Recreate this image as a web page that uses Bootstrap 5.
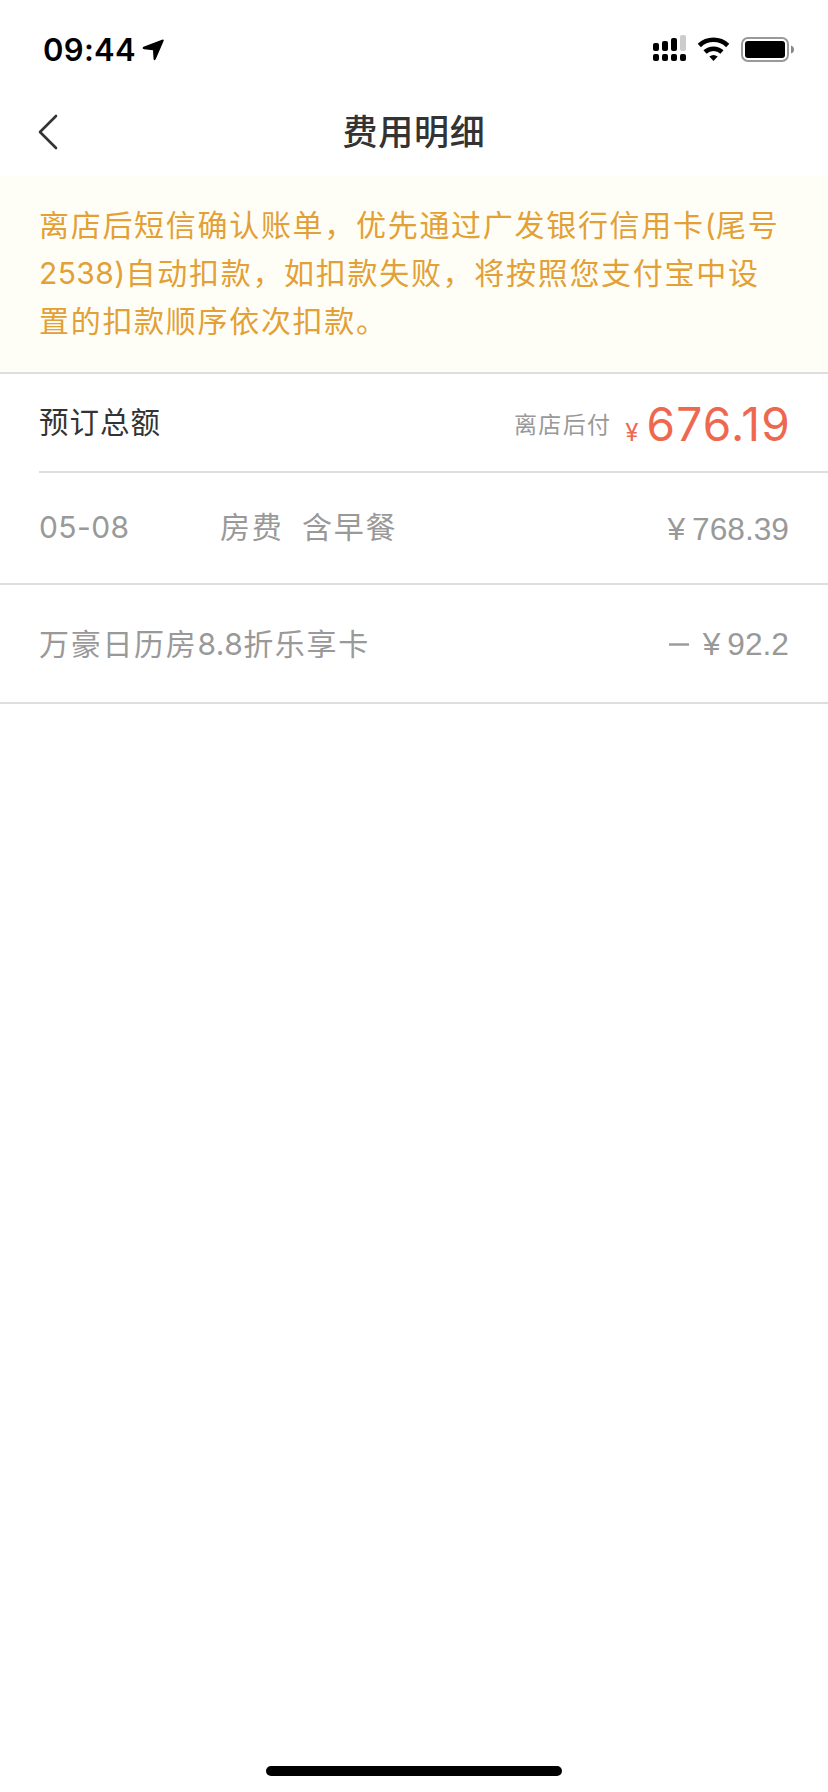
<!DOCTYPE html>
<html lang="zh-CN">
<head>
<meta charset="utf-8">
<meta name="viewport" content="width=device-width, initial-scale=1">
<title>费用明细</title>
<link href="https://cdn.jsdelivr.net/npm/bootstrap@5.3.0/dist/css/bootstrap.min.css" rel="stylesheet">
<style>
  body { font-family: Inter, "Noto Sans CJK SC", sans-serif; color: #333; background: #fff; }
  .screen { min-height: 1792px; }
  .status-bar { height: 88px; padding: 11px 33px 0 43px; color: #000; }
  .clock-group { padding-top: 19px; }
  .clock { font-size: 31px; font-weight: 600; line-height: 40px; letter-spacing: .3px; }
  .locate { margin-left: 6px; }
  .title-bar { height: 88px; display: grid; grid-template-columns: 90px 1fr 90px; align-items: center; }
  .back-link { padding-left: 38px; line-height: 0; color: #333; }
  .page-title { font-size: 35px; font-weight: 500; letter-spacing: .8px; line-height: 50px; }
  .notice { height: 198px; padding: 25px 0 0 39px; background: #fffef6; color: #e2a036; border-bottom: 2px solid #dedede; font-size: 30px; line-height: 48px; letter-spacing: 1.7px; white-space: nowrap; }
  .latin { letter-spacing: .4px; }
  .line-row { padding: 0 39px; border-bottom: 2px solid #dedede; color: #999; font-size: 30px; letter-spacing: 1.7px; white-space: nowrap; }
  .total-row { height: 99px; margin-left: 39px; padding-left: 0; padding-bottom: 1px; color: #333; font-size: 29.5px; letter-spacing: 1px; }
  .room-row { height: 112px; padding-bottom: 2px; }
  .card-row { height: 119px; padding-top: 1px; }
  .date-cell { width: 181px; }
  .room-name { width: 82px; }
  .pay-later { color: #999; font-size: 23px; letter-spacing: 1.3px; padding-top: 7px; }
  .amount-total { color: #ee6850; font-size: 46px; letter-spacing: 1.2px; margin-right: -2px; padding-top: 4px; }
  .yen-total { font-size: 24px; margin: 0 8px 0 14px; letter-spacing: 0; }
  .amount-plain { font-family: "Liberation Sans", sans-serif; font-size: 31.7px; letter-spacing: 0; }
  .room-row .amount-plain { padding-top: 5px; }
  .card-row .amount-plain { padding-top: 1px; }
  .yen { margin-right: 7px; }
  .minus { margin-right: 14px; }
  .home-bar { width: 296px; height: 10px; margin-bottom: 16px; background: #000; border-radius: 5px; }
</style>
</head>
<body>
<div class="screen d-flex flex-column">
  <header>
    <div class="status-bar d-flex justify-content-between">
      <div class="clock-group d-flex">
        <span class="clock">09:44</span>
        <svg class="locate" width="24" height="40" viewBox="0 0 24 40"><path d="M1.500 16.800 20 9.700q2.400-.7 1.500 1.600L13.800 29.100q-1.600 2.700-2.300-.4L11 20.200 2.300 19.200q-3-.8-.8-2.400Z"/></svg>
      </div>
      <svg width="144" height="54" viewBox="651 11 144 54">
        <g>
          <rect x="653" y="43" width="6" height="8" rx="2"/>
          <rect x="662" y="41" width="6" height="10" rx="2"/>
          <rect x="671" y="38" width="6" height="13" rx="2"/>
          <rect x="680" y="35" width="6" height="16" rx="2" fill="#ccc"/>
          <rect x="653" y="54" width="6" height="7" rx="2"/>
          <rect x="662" y="54" width="6" height="7" rx="2"/>
          <rect x="671" y="54" width="6" height="7" rx="2"/>
          <rect x="680" y="54" width="6" height="7" rx="2"/>
        </g>
        <g fill="none" stroke="#000" stroke-width="4.600">
          <path d="M699.300 45.500a20.500 20.500 0 0 1 28.400 0"/>
          <path d="M705 52a12.600 12.600 0 0 1 17 0"/>
        </g>
        <path d="M709.300 56.600q4.200-3 8.400 0L713.500 61Z"/>
        <rect x="742" y="38" width="46" height="23" rx="6" fill="none" stroke="#999" stroke-width="2"/>
        <rect x="745" y="41" width="40" height="17" rx="3"/>
        <path d="M791 45.500q3 1 3 4t-3 4Z" fill="#888"/>
      </svg>
    </div>
    <nav class="title-bar">
      <a class="back-link" href="#" aria-label="返回">
        <svg width="21" height="38" viewBox="0 0 21 38" fill="none" stroke="currentColor" stroke-width="2.600" stroke-linecap="round" stroke-linejoin="round"><path d="M18 3 2 19 18 35"/></svg>
      </a>
      <h1 class="page-title text-center m-0">费用明细</h1>
    </nav>
  </header>
  <main>
    <div class="notice">
      离店后短信确认账单，优先通过广发银行信用卡<span class="latin">(</span>尾号<br>
      <span class="latin">2538)</span>自动扣款，如扣款失败，将按照您支付宝中设<br>
      置的扣款顺序依次扣款。
    </div>
    <div class="line-row total-row d-flex justify-content-between align-items-center">
      <span>预订总额</span>
      <div class="d-flex align-items-center">
        <span class="pay-later">离店后付</span>
        <span class="amount-total"><span class="yen-total">¥</span>676.19</span>
      </div>
    </div>
    <div class="line-row room-row d-flex align-items-center">
      <span class="latin date-cell">05-08</span>
      <span class="room-name">房费</span>
      <span class="meal-name">含早餐</span>
      <span class="amount-plain ms-auto"><span class="yen">¥</span>768.39</span>
    </div>
    <div class="line-row card-row d-flex justify-content-between align-items-center">
      <span>万豪日历房<span class="latin">8.8</span>折乐享卡</span>
      <span class="amount-plain d-flex align-items-center"><svg class="minus" width="20" height="3"><path d="M0 1.500h20" stroke="#999" stroke-width="2.400"/></svg><span class="yen">¥</span>92.2</span>
    </div>
  </main>
  <div class="home-bar mt-auto mx-auto"></div>
</div>
<script src="https://cdn.jsdelivr.net/npm/bootstrap@5.3.0/dist/js/bootstrap.bundle.min.js"></script>
</body>
</html>
